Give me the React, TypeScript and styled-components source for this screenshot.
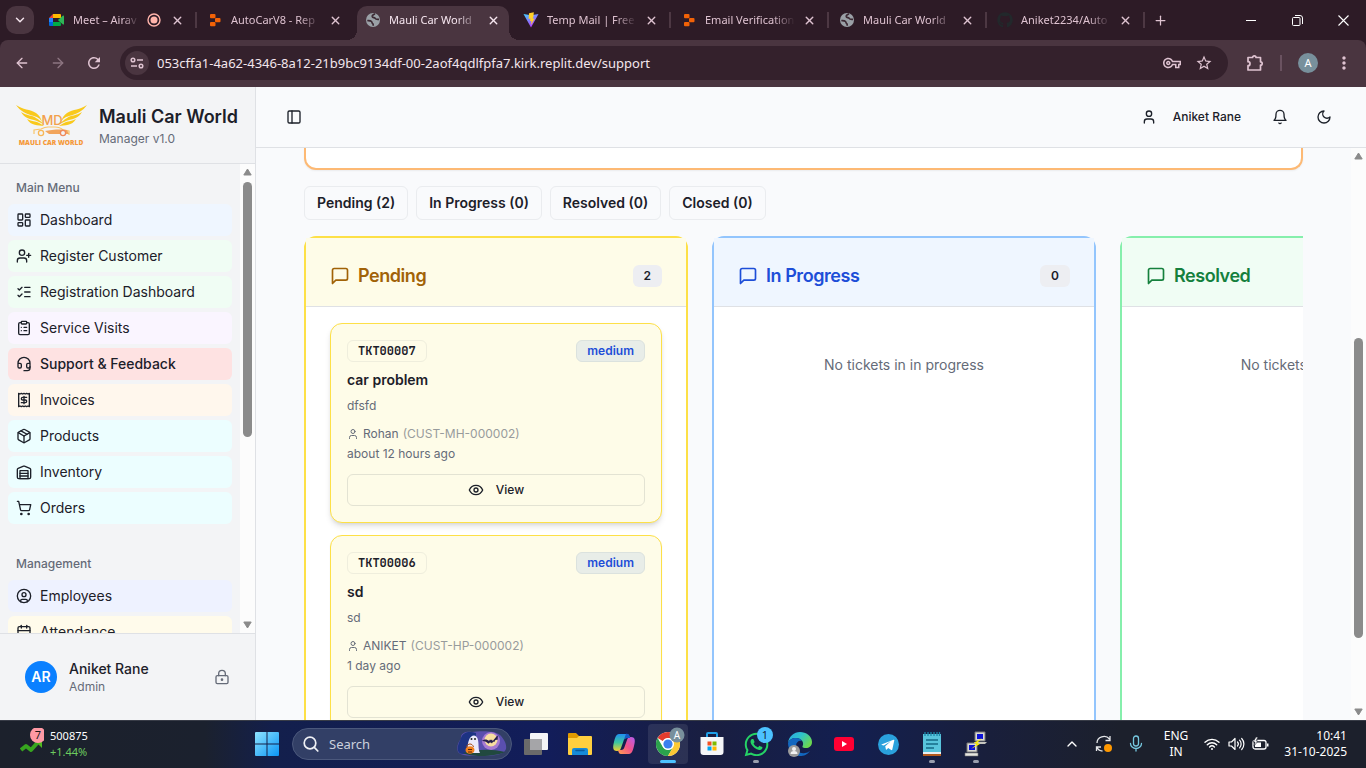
import React from "react";
import styled, { createGlobalStyle, css } from "styled-components";
import {
  LayoutDashboard,
  UserPlus,
  ListChecks,
  ClipboardList,
  Headset,
  Package,
  ShoppingCart,
  CircleUser,
  Calendar,
  LockKeyhole,
  PanelLeft,
  User,
  ArrowLeft,
  ArrowRight,
  X,
  Plus,
  ChevronDown,
  ChevronUp,
} from "lucide-react";
import { FaGithub, FaWhatsapp } from "react-icons/fa";
import { MdOutlineVpnKey, MdStarBorder, MdMoreVert, MdRefresh } from "react-icons/md";

const ui = `"Noto Sans", "Open Sans", sans-serif`;
const app = `Inter, "Liberation Sans", sans-serif`;

const Global = createGlobalStyle`
  *, *::before, *::after { box-sizing: border-box; }
  body { margin: 0; font-family: ${app}; color: #1c2029; }
  button, input { font: inherit; color: inherit; border: 0; background: none; padding: 0; margin: 0; }
  button { cursor: pointer; }
  h1, h2, h3, p, ul { margin: 0; padding: 0; font: inherit; }
  ul { list-style: none; }
  a { color: inherit; text-decoration: none; }
  svg { display: block; flex: none; }
`;

const Screen = styled.div`
  height: 100vh;
  display: flex;
  flex-direction: column;
  overflow: hidden;
`;

/* ---------- browser chrome ---------- */

const TabStrip = styled.div`
  display: flex;
  align-items: center;
  height: 40px;
  flex: none;
  padding-left: 6px;
  background: #2d1b26;
  color: #dfc3d1;
  font-family: ${ui};
  font-size: 11px;
`;

const TabSearch = styled.button`
  display: grid;
  place-items: center;
  width: 28px;
  height: 28px;
  margin-right: 4px;
  border-radius: 10px;
  background: #4a3540;
  color: #f3e3ec;
  flex: none;
`;

const Tab = styled.div<{ $active?: boolean; $line?: boolean }>`
  position: relative;
  display: flex;
  align-items: center;
  gap: 8px;
  width: 158px;
  height: 34px;
  margin-top: 6px;
  padding: 0 12px 6px 11px;
  flex: 0 1 158px;
  z-index: 0;
  ${(p) =>
    p.$line &&
    css`
      &::after {
        content: "";
        position: absolute;
        right: -1px;
        top: 6px;
        width: 2px;
        height: 16px;
        background: #4d3843;
      }
    `}
  ${(p) =>
    p.$active &&
    css`
      color: #f6e6ef;
      &::before {
        content: "";
        position: absolute;
        z-index: -1;
        inset: 0 3px;
        border-radius: 10px 10px 0 0;
        background: #4a3540;
      }
      &::after {
        content: "";
        position: absolute;
        z-index: -1;
        left: -7px;
        right: -7px;
        bottom: 0;
        height: 10px;
        background:
          radial-gradient(circle at 0 0, transparent 10px, #4a3540 10px) left / 10px 10px no-repeat,
          radial-gradient(circle at 100% 0, transparent 10px, #4a3540 10px) right / 10px 10px no-repeat;
      }
    `}
`;

const TabTitle = styled.button`
  flex: 1;
  min-width: 0;
  overflow: hidden;
  white-space: nowrap;
  text-align: left;
  line-height: 18px;
  mask-image: linear-gradient(to right, #000 75%, transparent);
`;

const IconButton = styled.button<{ $w?: number }>`
  display: grid;
  place-items: center;
  flex: none;
  width: ${(p) => (p.$w ? `${p.$w}px` : "auto")};
`;

const WindowButtons = styled.div`
  display: flex;
  margin-left: auto;
  color: #fff;
  button {
    width: 46px;
    height: 40px;
  }
`;

const Toolbar = styled.div`
  display: flex;
  align-items: center;
  height: 47px;
  flex: none;
  padding: 0 12px 1px;
  background: #4a3540;
  color: #dfc3d1;
  border-radius: 8px 8px 0 0;
  font-family: ${ui};
`;

const ToolbarWrap = styled.div`
  background: #2d1b26;
`;

const NavButton = styled(IconButton)<{ $dim?: boolean }>`
  width: 20px;
  height: 20px;
  margin-right: 16px;
  opacity: ${(p) => (p.$dim ? 0.45 : 1)};
`;

const Omnibox = styled.div`
  display: flex;
  align-items: center;
  flex: 1;
  height: 34px;
  padding: 0 15px 0 5px;
  border-radius: 17px;
  background: #34212c;
`;

const SiteInfo = styled(IconButton)`
  width: 24px;
  height: 24px;
  border-radius: 12px;
  background: #4a3540;
  margin-right: 8px;
`;

const Address = styled.input`
  flex: 1;
  min-width: 0;
  height: 24px;
  color: #f3e6ed;
  font-size: 13px;
  outline: 0;
`;

const OmniActions = styled.div`
  display: flex;
  gap: 14px;
`;

const ToolbarEnd = styled.div`
  display: flex;
  align-items: center;
  margin-left: 18px;
`;

const ToolbarRule = styled.span`
  width: 2px;
  height: 16px;
  margin: 0 16px;
  background: #6a5260;
`;

const Profile = styled.button`
  width: 20px;
  height: 20px;
  margin-right: 16px;
  border-radius: 10px;
  background: #78909c;
  color: #fff;
  font-size: 11px;
  line-height: 20px;
`;

/* ---------- application ---------- */

const Page = styled.div`
  display: flex;
  flex: 1;
  min-height: 0;
  background: #f9fafc;
`;

const Sidebar = styled.aside`
  display: flex;
  flex-direction: column;
  width: 256px;
  flex: none;
  background: #f3f4f6;
  border-right: 1px solid #dfe1e5;
`;

const Brand = styled.div`
  display: flex;
  align-items: center;
  gap: 12px;
  height: 77px;
  flex: none;
  padding-left: 16px;
  border-bottom: 1px solid #dfe1e5;
`;

const BrandName = styled.h1`
  font-size: 18px;
  line-height: 28px;
  font-weight: 600;
  white-space: nowrap;
`;

const Small = styled.p`
  font-size: 12px;
  line-height: 16px;
  color: #656b78;
`;

const MenuArea = styled.div`
  display: flex;
  flex: 1;
  min-height: 0;
`;

const Menu = styled.nav`
  flex: 1;
  min-height: 0;
  overflow: hidden;
  display: flex;
  flex-direction: column;
  gap: 8px;
`;

const MenuGroup = styled.section`
  padding: 8px;
`;

const MenuLabel = styled.h2`
  padding: 0 8px;
  font-size: 12px;
  line-height: 32px;
  font-weight: 500;
  color: #656b78;
`;

const MenuList = styled.ul`
  display: flex;
  flex-direction: column;
  gap: 4px;
`;

const MenuLink = styled.a<{ $bg: string; $active?: boolean }>`
  display: flex;
  align-items: center;
  gap: 8px;
  height: 32px;
  padding: 0 8px;
  border-radius: 6px;
  background: ${(p) => p.$bg};
  font-size: 14px;
  line-height: 20px;
  font-weight: ${(p) => (p.$active ? 500 : 400)};
`;

const SidebarFooter = styled.div`
  display: flex;
  align-items: center;
  gap: 12px;
  height: 87px;
  flex: none;
  padding: 0 25px;
  border-top: 1px solid #dfe1e5;
`;

const Avatar = styled.span`
  width: 32px;
  height: 32px;
  border-radius: 16px;
  background: #0a80ff;
  color: #fff;
  font-size: 14px;
  font-weight: 600;
  line-height: 32px;
  text-align: center;
`;

const UserName = styled.p`
  font-size: 14px;
  line-height: 20px;
  font-weight: 500;
`;

const LockButton = styled(IconButton)`
  margin-left: auto;
  color: #656b78;
`;

const Track = styled.div`
  display: flex;
  flex-direction: column;
  align-items: center;
  width: 15px;
  flex: none;
  padding: 4px 0;
  background: #fcfcfc;
`;

const Space = styled.span<{ $grow: number }>`
  flex: ${(p) => p.$grow} 1 0;
`;

const Thumb = styled(Space)`
  width: 9px;
  border-radius: 5px;
  background: #8b8b8b;
`;

function Scrollbar({ before, size, after }: { before: number; size: number; after: number }) {
  return (
    <Track aria-hidden="true">
      <svg width="9" height="8" viewBox="0 0 9 8">
        <path d="M4.500 1 8.200 7H.8Z" fill="#8b8b8b" stroke="#8b8b8b" strokeLinejoin="round" />
      </svg>
      <Space $grow={before} />
      <Thumb $grow={size} />
      <Space $grow={after} />
      <svg width="9" height="8" viewBox="0 0 9 8">
        <path d="M4.500 7 8.200 1H.8Z" fill="#8b8b8b" stroke="#8b8b8b" strokeLinejoin="round" />
      </svg>
    </Track>
  );
}

const Workspace = styled.div`
  display: flex;
  flex-direction: column;
  flex: 1;
  min-width: 0;
`;

const TopBar = styled.header`
  display: flex;
  align-items: center;
  height: 61px;
  flex: none;
  padding: 0 34px 0 30px;
  border-bottom: 1px solid #dfe1e5;
`;

const TopActions = styled.div`
  display: flex;
  align-items: center;
  gap: 28px;
  margin-left: auto;
`;

const UserButton = styled.button`
  display: flex;
  align-items: center;
  gap: 16px;
  margin-right: 3px;
  font-size: 12px;
  line-height: 16px;
  font-weight: 500;
`;

const ScrollArea = styled.div`
  display: flex;
  flex: 1;
  min-height: 0;
`;

const Main = styled.main`
  display: flex;
  flex-direction: column;
  gap: 16px;
  flex: 1;
  min-width: 0;
  padding: 0 48px;
  overflow: hidden;
`;

const Panel = styled.section`
  height: 22px;
  flex: none;
  background: #fff;
  border: 2px solid #fdb974;
  border-top: 0;
  border-radius: 0 0 12px 12px;
  box-shadow: 0 1px 2px rgba(0, 0, 0, 0.06);
`;

const Filters = styled.div`
  display: flex;
  gap: 8px;
  flex: none;
`;

const Filter = styled.button`
  height: 34px;
  padding: 0 12px;
  border: 1px solid #eaecef;
  border-radius: 6px;
  font-size: 14px;
  line-height: 20px;
  font-weight: 600;
  white-space: nowrap;
`;

const Board = styled.div`
  display: flex;
  gap: 24px;
  flex: none;
  overflow: hidden;
`;

const Column = styled.section<{ $line: string }>`
  flex: 0 0 384px;
  min-height: 560px;
  border: 2px solid ${(p) => p.$line};
  border-radius: 12px;
  background: #fff;
`;

const ColumnHead = styled.div<{ $bg: string; $fg: string }>`
  display: flex;
  align-items: center;
  gap: 8px;
  padding: 24px 24px 16px;
  border-bottom: 1px solid #dfe1e5;
  background: ${(p) => p.$bg};
  color: ${(p) => p.$fg};
`;

const ColumnTitle = styled.h2`
  font-size: 18px;
  line-height: 28px;
  font-weight: 600;
  letter-spacing: -0.025em;
`;

const Count = styled.span`
  margin-left: auto;
  padding: 3px 11px;
  border-radius: 6px;
  background: #edeef2;
  color: #1c2029;
  font-size: 12px;
  line-height: 16px;
  font-weight: 600;
`;

const ColumnBody = styled.div`
  display: flex;
  flex-direction: column;
  gap: 12px;
  padding: 16px 24px;
`;

const Empty = styled.p`
  padding: 32px 0;
  text-align: center;
  font-size: 14px;
  line-height: 20px;
  color: #656b78;
`;

const Ticket = styled.article<{ $raised?: boolean }>`
  padding: 16px;
  border: 1px solid #fde047;
  border-radius: 12px;
  background: #fefce8;
  box-shadow: ${(p) =>
    p.$raised ? "0 4px 6px -1px rgba(0,0,0,.12), 0 2px 4px -2px rgba(0,0,0,.12)" : "0 1px 2px rgba(0,0,0,.05)"};
`;

const Row = styled.div`
  display: flex;
  justify-content: space-between;
`;

const Tag = styled.span<{ $kind: "id" | "level" }>`
  padding: 2px 10px;
  border: 1px solid ${(p) => (p.$kind === "id" ? "#efeedd" : "#dbe2de")};
  border-radius: 6px;
  background: ${(p) => (p.$kind === "id" ? "transparent" : "#e8ede8")};
  color: ${(p) => (p.$kind === "id" ? "#1c2029" : "#1d4ed8")};
  font-family: ${(p) => (p.$kind === "id" ? `"JetBrains Mono", "Liberation Mono", monospace` : app)};
  font-size: 12px;
  line-height: 16px;
  font-weight: 600;
`;

const TicketTitle = styled.h3`
  margin-top: 8px;
  font-size: 14px;
  line-height: 20px;
  font-weight: 600;
`;

const TicketText = styled(Small)`
  margin: 8px 0 12px;
`;

const Customer = styled(Small)`
  display: flex;
  align-items: center;
  gap: 4px;
  margin-bottom: 4px;
  span {
    color: #989b9c;
  }
`;

const ViewButton = styled.button`
  display: flex;
  align-items: center;
  justify-content: center;
  gap: 12px;
  width: 100%;
  height: 32px;
  margin-top: 12px;
  border: 1px solid #e3e3d3;
  border-radius: 6px;
  font-size: 12px;
  line-height: 16px;
  font-weight: 500;
`;

/* ---------- outline icons ---------- */

function Glyph({ size = 16, children }: { size?: number; children: React.ReactNode }) {
  return (
    <svg
      width={size}
      height={size}
      viewBox="0 0 24 24"
      fill="none"
      stroke="currentColor"
      strokeWidth="2"
      strokeLinecap="round"
      strokeLinejoin="round"
      aria-hidden="true"
    >
      {children}
    </svg>
  );
}

const ReceiptIcon = () => (
  <Glyph>
    <path d="M4 2v20l2-1 2 1 2-1 2 1 2-1 2 1 2-1 2 1V2l-2 1-2-1-2 1-2-1-2 1-2-1-2 1Z" />
    <path d="M16 8h-6a2 2 0 1 0 0 4h4a2 2 0 1 1 0 4H8M12 17.500v-11" />
  </Glyph>
);

const WarehouseIcon = () => (
  <Glyph>
    <path d="M22 8.350V20a2 2 0 0 1-2 2H4a2 2 0 0 1-2-2V8.350A2 2 0 0 1 3.260 6.500l8-3.200a2 2 0 0 1 1.480 0l8 3.200A2 2 0 0 1 22 8.350Z" />
    <path d="M6 18h12M6 14h12" />
    <rect x="6" y="10" width="12" height="12" />
  </Glyph>
);

const BellIcon = () => (
  <Glyph>
    <path d="M6 8a6 6 0 0 1 12 0c0 7 3 9 3 9H3s3-2 3-9M10.300 21a1.940 1.940 0 0 0 3.400 0" />
  </Glyph>
);

const MoonIcon = () => (
  <Glyph>
    <path d="M12 3a6 6 0 0 0 9 9 9 9 0 1 1-9-9Z" />
  </Glyph>
);

const MessageIcon = () => (
  <Glyph size={20}>
    <path d="M21 15a2 2 0 0 1-2 2H7l-4 4V5a2 2 0 0 1 2-2h14a2 2 0 0 1 2 2z" />
  </Glyph>
);

const EyeIcon = () => (
  <Glyph>
    <path d="M2 12s3-7 10-7 10 7 10 7-3 7-10 7-10-7-10-7Z" />
    <circle cx="12" cy="12" r="3" />
  </Glyph>
);

/* ---------- favicons and logos ---------- */

const MeetIcon = () => (
  <svg width="16" height="16" viewBox="0 0 16 16">
    <path d="M4 2h7a1 1 0 0 1 1 1v3H4Z" fill="#ffba00" />
    <path d="M4 2 0 6h4Z" fill="#ea4335" />
    <path d="M0 6h4v4H0Z" fill="#2684fc" />
    <path d="M0 10h4v4H1a1 1 0 0 1-1-1Z" fill="#0066da" />
    <path d="M4 10h8v3a1 1 0 0 1-1 1H4Z" fill="#00ac47" />
    <path d="M12 6v6L9 8Z" fill="#00832d" />
    <path d="m9 8 5-4.500c.4-.3 1 0 1 .5v8c0 .5-.6.800-1 .5Z" fill="#2fb457" />
    <path d="M4 6h5v4H4Z" fill="#2d1b26" />
  </svg>
);

const RecordIcon = () => (
  <svg width="16" height="14" viewBox="0 0 16 14">
    <circle cx="7" cy="7" r="6" fill="none" stroke="#ffb4ab" strokeWidth="1.400" />
    <circle cx="7" cy="7" r="3.500" fill="#ffb4ab" />
  </svg>
);

const ReplitIcon = () => (
  <svg width="16" height="16" viewBox="0 0 16 16" fill="#f26207">
    <rect x="3" y="2" width="5.500" height="4.300" rx="1" />
    <rect x="8" y="6" width="5.500" height="4.300" rx="1" />
    <rect x="3" y="10" width="5.500" height="4.300" rx="1" />
  </svg>
);

const GlobeIcon = () => (
  <svg width="16" height="16" viewBox="0 0 16 16">
    <circle cx="8" cy="8" r="7" fill="#9aa0a6" />
    <path
      d="M2.300 8.500c1.500.2 3.200 0 4.200 1 .8.800.3 1.800 1.300 2.300.6.300.4 1 .4 2M10 1.800C8.500 2.600 6.800 3 7.300 4.600c.5 1.400 2.400.6 3 1.900.5 1.100 2 .9 3.700.8"
      fill="none"
      stroke="#3b2933"
      strokeWidth="1.700"
    />
  </svg>
);

const ViteIcon = () => (
  <svg width="16" height="16" viewBox="0 0 16 16">
    <defs>
      <linearGradient id="vite" x1="0" y1="0" x2=".6" y2="1">
        <stop offset="0" stopColor="#41d1ff" />
        <stop offset="1" stopColor="#bd34fe" />
      </linearGradient>
    </defs>
    <path d="M.5 2 8 15.500 15.500 2 8 3.300Z" fill="url(#vite)" />
    <path d="M10.800.3 6 1.300 5.600 7l1.900-.4-.6 2.600 1.600-.4L8 13l3.600-6.600-1.900.4.8-2.500Z" fill="#ffd028" />
  </svg>
);

const PuzzleIcon = () => (
  <svg width="18" height="18" viewBox="0 0 18 18" fill="none" stroke="currentColor" strokeWidth="1.700" strokeLinejoin="round">
    <path d="M2 3.500h4.600a1.700 1.700 0 0 1 3.400 0h4.500v4.300a1.700 1.700 0 0 1 0 3.400V16H2v-4.300a2 2 0 0 0 0-4Z" />
  </svg>
);

const BrandLogo = () => (
  <svg width="71" height="44" viewBox="0 0 71 44" aria-label="Mauli Car World logo">
    <g fill="#f9c91c">
      <path d="M0 2c7 5 14 4 20 8 3 2 5 5 6 9-2-4-5-5-8-6C10 11 4 8 0 2Z" />
      <path d="M5 9c6 4 11 3 15 6 3 2 5 3 7 6-3-2-6-3-9-4C12 16 8 14 5 9Z" />
      <path d="M11 16c4 2 7 2 10 3 3 1 5 3 7 4-6-1-13 0-17-7Z" />
      <path d="M71 2c-7 5-14 4-20 8-3 2-5 5-6 9 2-4 5-5 8-6 8-2 14-5 18-11Z" />
      <path d="M66 9c-6 4-11 3-15 6-3 2-5 3-7 6 3-2 6-3 9-4 6-1 10-3 13-8Z" />
      <path d="M60 16c-4 2-7 2-10 3-3 1-5 3-7 4 6-1 13 0 17-7Z" />
    </g>
    <text x="36" y="22" textAnchor="middle" fontFamily="Inter" fontSize="13" fontWeight="500" fill="#f2a04c">
      MD
    </text>
    <path
      d="M18 31v-4l7-1c2-1 4-2 7-2h7c4 0 6 1 8 3l6 1v4"
      fill="none"
      stroke="#f9c56a"
      strokeWidth="1.200"
    />
    <path d="M29 28c6-1 14-2 22-1l2 4H33Z" fill="#f2a55c" />
    <circle cx="25" cy="30" r="2.600" fill="#f3f4f6" stroke="#f7b757" strokeWidth="1.300" />
    <circle cx="47" cy="30" r="2.600" fill="#f3f4f6" stroke="#ef8a5c" strokeWidth="1.300" />
    <text x="35" y="42" textAnchor="middle" fontFamily="Open Sans" fontSize="6.600" fontWeight="800" fill="#f5993a">
      MAULI CAR WORLD
    </text>
  </svg>
);

/* ---------- taskbar ---------- */

const Taskbar = styled.footer`
  display: flex;
  align-items: center;
  height: 48px;
  flex: none;
  padding: 0 19px 1px 0;
  border-top: 1px solid #383c47;
  background: linear-gradient(
    90deg,
    #1c212c 0,
    #1b212e 15%,
    #131f4c 20%,
    #121d5a 40%,
    #191e40 52%,
    #131f50 62%,
    #191f3c 72%,
    #1c202c 82%
  );
  color: #fff;
  font-family: ${ui};
  font-size: 12px;
  line-height: 16px;
`;

const Stocks = styled.button`
  display: flex;
  gap: 6px;
  width: 245px;
  padding-left: 20px;
  flex: none;
  text-align: left;
  font-size: 11px;
`;

const Gain = styled.span`
  display: block;
  color: #6ccb5f;
`;

const TaskButton = styled.button<{ $current?: boolean }>`
  display: grid;
  place-items: center;
  width: 40px;
  height: 40px;
  margin: 0 2px;
  flex: none;
  border-radius: 4px;
  background: ${(p) => (p.$current ? "rgba(255,255,255,.09)" : "none")};
`;

const TaskSearch = styled.label`
  display: flex;
  align-items: center;
  gap: 10px;
  width: 220px;
  height: 32px;
  margin: 0 2px 0 3px;
  padding: 0 4px 0 10px;
  flex: none;
  border: 1px solid #4b587c;
  border-radius: 16px;
  background: #323f66;
  input {
    flex: 1;
    min-width: 0;
    height: 20px;
    font-size: 13px;
    outline: 0;
  }
  input::placeholder {
    color: #ccd1dd;
    opacity: 1;
  }
`;

const Tray = styled.div`
  display: flex;
  align-items: center;
  margin-left: auto;
  text-align: center;
`;

const TrayItem = styled.button<{ $w: number }>`
  display: grid;
  place-items: center;
  width: ${(p) => p.$w}px;
`;

const Clock = styled.button`
  width: 75px;
  text-align: right;
`;

const StockIcon = () => (
  <svg width="24" height="30" viewBox="0 0 24 30">
    <path d="m1 22 5-4 5 4 8-9" fill="none" stroke="#37a51f" strokeWidth="4" strokeLinejoin="round" />
    <path d="M14 12h8v8Z" fill="#4fb81f" />
    <circle cx="18" cy="7" r="8" fill="#ff99a4" />
    <text x="18" y="11" textAnchor="middle" fontSize="11" fill="#1a1a1a">
      7
    </text>
  </svg>
);

const StartIcon = () => (
  <svg width="24" height="24" viewBox="0 0 24 24">
    <defs>
      <linearGradient id="win" x1="0" y1="0" x2="1" y2="1">
        <stop offset="0" stopColor="#8fe3ff" />
        <stop offset="1" stopColor="#0a95f5" />
      </linearGradient>
    </defs>
    <path d="M1 0h10.500v11.500H0V1a1 1 0 0 1 1-1Zm11.500 0H23a1 1 0 0 1 1 1v10.500H12.500V0ZM0 12.500h11.500V24H1a1 1 0 0 1-1-1Zm12.500 0H24V23a1 1 0 0 1-1 1H12.500Z" fill="url(#win)" />
  </svg>
);

const SearchIcon = () => (
  <svg width="16" height="16" viewBox="0 0 16 16" fill="none" stroke="#eef0f5" strokeWidth="1.700" strokeLinecap="round">
    <circle cx="7" cy="7" r="5.800" />
    <path d="m11.300 11.300 3.500 3.700" />
  </svg>
);

const HalloweenArt = () => (
  <svg width="50" height="26" viewBox="0 0 50 26">
    <path d="M1 21C-1 15 2 10 4 8 3 2 9 0 15 1c7-1 22-2 28 3 4 4 7 9 6 14-2 6-12 7-24 7S4 25 1 21Z" fill="#5a4fae" />
    <path d="M1 20C0 14 3 10 4 7c2-6 8-7 15-5v21H6c-3 0-4-1-5-3Z" fill="#1d3383" />
    <circle cx="34" cy="10" r="9" fill="#a77bd2" />
    <circle cx="34" cy="9" r="6.500" fill="#f8e0a0" />
    <path d="M6 22c12-3 26-5 42-1-6 4-33 6-42 1Z" fill="#21493f" />
    <path d="M10 22c1-4 0-8 2-13 2-6 8-6 9 0 1 5 0 9 2 13Z" fill="#eceafb" />
    <circle cx="14.500" cy="8" r="1" fill="#222" />
    <circle cx="18" cy="8" r="1" fill="#222" />
    <ellipse cx="13" cy="19" rx="4.500" ry="3.800" fill="#f2811d" />
    <path d="M9.500 16c1-4 6-4 7 0" fill="none" stroke="#a84a10" />
    <path d="m11 18 1 1 1-1 1 1 1-1M11 21h4" stroke="#5b2408" fill="none" />
    <path d="M25 10c2-2 5-2 7 0l1-1.500 1 .8 1-.8.700 1.500C38 8 39 5 41 4.500c-.5 2 0 3-.5 4.500-2-.5-2.500.5-3 2-1-.5-2 0-2.500 1.500-1-1.500-2.500-1.500-3.500.3C30 11 28 10.300 25 10Z" fill="#27204d" />
  </svg>
);

const TaskViewIcon = () => (
  <svg width="26" height="24" viewBox="0 0 26 24">
    <rect x="7" y="1" width="18" height="17" rx="1" fill="#f4f4f6" />
    <rect x="1" y="7" width="18" height="16" rx="1" fill="#6a6a6a" />
    <path d="M7 7h12v11H7Z" fill="#a5a5a8" />
  </svg>
);

const FolderIcon = () => (
  <svg width="26" height="24" viewBox="0 0 26 24">
    <path d="M1 2a1 1 0 0 1 1-1h7l3 3v4H1Z" fill="#e19a00" />
    <path d="M1 6h9l2-2h12a1 1 0 0 1 1 1v17a1 1 0 0 1-1 1H2a1 1 0 0 1-1-1Z" fill="#ffcf3f" />
    <path d="M5 23v-5a2 2 0 0 1 2-2h12a2 2 0 0 1 2 2v5Z" fill="#168ad8" />
    <path d="M9 18.500h8" stroke="#0b5a9c" strokeWidth="1.500" strokeLinecap="round" />
  </svg>
);

const CopilotIcon = () => (
  <svg width="24" height="24" viewBox="0 0 24 24">
    <defs>
      <linearGradient id="cpa" x1="0" y1="0" x2="0" y2="1">
        <stop offset="0" stopColor="#1f8ff0" />
        <stop offset=".5" stopColor="#3cc6a0" />
        <stop offset="1" stopColor="#f3d02c" />
      </linearGradient>
      <linearGradient id="cpb" x1="1" y1="0" x2="0" y2="1">
        <stop offset="0" stopColor="#b45df0" />
        <stop offset=".5" stopColor="#f2528a" />
        <stop offset="1" stopColor="#ffa34d" />
      </linearGradient>
    </defs>
    <path d="M7 2h8c2 0 2.500 2 3 4h-3c-2 0-3 1-3.500 3L9 16c-.5 2-1.500 3-4 3-5 0-4-5-3-9s2-8 5-8Z" fill="url(#cpa)" />
    <path d="M17 22H9c-2 0-2.500-2-3-4h3c2 0 3-1 3.500-3L15 8c.5-2 1.500-3 4-3 5 0 4 5 3 9s-2 8-5 8Z" fill="url(#cpb)" />
    <path d="M14 1.800c3 0 3.500 2 4.200 4.200H15c-2 0-2.800 1-3.300 2.600Z" fill="#1459c7" />
  </svg>
);

const ChromeIcon = () => (
  <svg width="40" height="40" viewBox="0 0 40 40">
    <circle cx="20" cy="20" r="12" fill="#fff" />
    <path d="M9.600 14A12 12 0 0 1 30.400 14H20a6 6 0 0 0-5.200 3Z" fill="#e33b2e" />
    <path d="M9.600 14A12 12 0 0 0 20 32l5.200-9A6 6 0 0 1 14.800 23Z" fill="#2ba24c" />
    <path d="M30.400 14A12 12 0 0 1 20 32l5.200-9A6 6 0 0 0 20 14Z" fill="#fcc934" />
    <circle cx="20" cy="20" r="5.800" fill="#fff" />
    <circle cx="20" cy="20" r="4.600" fill="#3b80f0" />
    <circle cx="29" cy="11" r="7.500" fill="#78909c" />
    <text x="29" y="15" textAnchor="middle" fontSize="10" fill="#fff">
      A
    </text>
    <rect x="12" y="36" width="16" height="3" rx="1.500" fill="#4cc2ff" />
  </svg>
);

const StoreIcon = () => (
  <svg width="24" height="24" viewBox="0 0 24 24">
    <path d="M7 6V2a1 1 0 0 1 1-1h8a1 1 0 0 1 1 1v4" fill="none" stroke="#1fa0e8" strokeWidth="2" />
    <path d="M.5 5h23v15a3 3 0 0 1-3 3h-17a3 3 0 0 1-3-3Z" fill="#f5f6f8" />
    <path d="M7.500 9.500h4v4h-4Z" fill="#f25022" />
    <path d="M12.500 9.500h4v4h-4Z" fill="#7fba00" />
    <path d="M7.500 14.500h4v4h-4Z" fill="#00a4ef" />
    <path d="M12.500 14.500h4v4h-4Z" fill="#ffb900" />
  </svg>
);

const WhatsAppIcon = () => (
  <svg width="40" height="40" viewBox="0 0 40 40">
    <FaWhatsapp x="7" y="7" size={27} color="#25d366" />
    <circle cx="29" cy="11" r="8" fill="#4cc2ff" />
    <text x="29" y="15" textAnchor="middle" fontSize="11" fill="#12233a">
      1
    </text>
    <rect x="17" y="36" width="6" height="3" rx="1.500" fill="#9a9fae" />
  </svg>
);

const EdgeIcon = () => (
  <svg width="26" height="26" viewBox="0 0 26 26">
    <defs>
      <linearGradient id="edge" x1="0" y1="0" x2="1" y2=".6">
        <stop offset="0" stopColor="#2aa5e8" />
        <stop offset=".5" stopColor="#2fc3c9" />
        <stop offset="1" stopColor="#6bd84f" />
      </linearGradient>
    </defs>
    <path d="M1 12C2 5 7 1 13 1s12 4 12 10c0 4-3 6-6 6-4 0-4-1-3-3 1-4-3-7-7-7-4 0-7 2-8 5Z" fill="url(#edge)" />
    <path d="M1 12c1-3 4-5 8-5 3 0 5 1 6 3-3-1-6 1-6 5 0 5 4 8 9 7 2 0 3-1 5-2-3 4-6 5-10 5C6 25 1 19 1 12Z" fill="#1267c0" />
    <circle cx="7" cy="20" r="6" fill="#9c9c9c" />
    <circle cx="7" cy="18" r="2" fill="#f1f1f1" />
    <path d="M3.500 23a3.500 3 0 0 1 7 0Z" fill="#f1f1f1" />
  </svg>
);

const YouTubeIcon = () => (
  <svg width="20" height="14" viewBox="0 0 20 14">
    <rect width="20" height="14" rx="3" fill="#ff0033" />
    <path d="m8 4 5 3-5 3Z" fill="#fff" />
  </svg>
);

const TelegramIcon = () => (
  <svg width="21" height="21" viewBox="0 0 21 21">
    <circle cx="10.500" cy="10.500" r="10.500" fill="#2aa1dc" />
    <path d="m4 10.300 11.500-4.600c.6-.2 1 .1.800.9l-2 9c-.1.600-.6.800-1.100.5l-3-2.200-1.500 1.500c-.4.4-.7.300-.8-.2l-.7-2.900 5.600-5-7 4.300-2-.6c-.5-.2-.4-.5.200-.7Z" fill="#fff" />
  </svg>
);

const NotepadIcon = () => (
  <svg width="20" height="40" viewBox="0 0 20 40">
    <path d="M1 10h18v20H1Z" fill="#58c4dc" />
    <path d="M1 29h18v3H1Z" fill="#b45a1e" />
    <path d="M1 28h18v2H1Z" fill="#e9eef2" />
    <path d="M3 8v4M6 8v4M9 8v4M12 8v4M15 8v4M17.500 8v4" stroke="#1b87a8" strokeWidth="1.300" />
    <path d="M4 16h12M4 20h12M4 24h8" stroke="#156a86" strokeWidth="1.500" />
    <rect x="7" y="36" width="6" height="3" rx="1.500" fill="#9a9fae" />
  </svg>
);

const PuttyIcon = () => (
  <svg width="24" height="40" viewBox="0 0 24 40">
    <path d="M11 8h10v9H11Z" fill="#d9d9d2" stroke="#777" />
    <path d="M13 10h6v5h-6Z" fill="#0c12d8" />
    <path d="M10 18h13l-2 2H10Z" fill="#c6c6bf" />
    <path d="M3 19h10v9H3Z" fill="#d9d9d2" stroke="#777" />
    <path d="M5 21h6v5H5Z" fill="#0c12d8" />
    <path d="M1 29h13v3H1Z" fill="#e6e6e0" stroke="#777" strokeWidth=".6" />
    <path d="m18 14-8 5 3 1-6 5 9-5-3-1Z" fill="#fff200" />
    <rect x="9" y="36" width="6" height="3" rx="1.500" fill="#9a9fae" />
  </svg>
);

const SyncIcon = () => (
  <svg width="18" height="18" viewBox="0 0 18 18" fill="none" stroke="#e6e7ea" strokeWidth="1.300">
    <path d="M2 8a7 6.500 0 0 1 12.500-4M15 1v4.500h-4.500M1.500 16v-4h4.500M2 12.500C3 14.500 5 16 7.500 16" />
    <circle cx="13" cy="13" r="4" fill="#ff9800" stroke="none" />
  </svg>
);

const MicIcon = () => (
  <svg width="14" height="18" viewBox="0 0 14 18" fill="none" stroke="#76c8e0" strokeWidth="1.300" strokeLinecap="round">
    <rect x="4.500" y="1" width="5" height="10" rx="2.500" />
    <path d="M1.500 8.500a5.500 5 0 0 0 11 0M7 13.500V16" />
  </svg>
);

const WifiIcon = () => (
  <svg width="16" height="14" viewBox="0 0 16 14" fill="none" stroke="#fff" strokeWidth="1.400" strokeLinecap="round">
    <path d="M1 5.200a10 10 0 0 1 14 0M3.300 7.700a6.700 6.700 0 0 1 9.400 0M5.600 10a3.400 3.400 0 0 1 4.800 0" />
    <circle cx="8" cy="12" r="1" fill="#fff" stroke="none" />
  </svg>
);

const VolumeIcon = () => (
  <svg width="17" height="14" viewBox="0 0 17 14" fill="none" stroke="#fff" strokeWidth="1.200" strokeLinecap="round" strokeLinejoin="round">
    <path d="M1 5h2.500L7 1.500v11L3.500 9H1ZM9.500 5a3 3 0 0 1 0 4M11.600 3.200a5.500 5.500 0 0 1 0 7.600M13.700 1.500a8 8 0 0 1 0 11" />
  </svg>
);

const BatteryIcon = () => (
  <svg width="17" height="14" viewBox="0 0 17 14">
    <rect x="1" y="3.500" width="13" height="8.500" rx="2" fill="none" stroke="#fff" strokeWidth="1.300" />
    <path d="M3 5.500h6V10H3Z" fill="#fff" />
    <path d="M15 6.500h1.500v3H15Z" fill="#fff" />
    <path d="M4 0 1 5h2l-1 4 4-5H4l2-4Z" fill="#fff" stroke="#1c202c" strokeWidth=".6" />
  </svg>
);

/* ---------- data ---------- */

const tabs = [
  { title: "Meet – Airav", icon: <MeetIcon />, line: true, recording: true },
  { title: "AutoCarV8 - Rep", icon: <ReplitIcon /> },
  { title: "Mauli Car World", icon: <GlobeIcon />, active: true },
  { title: "Temp Mail | Free", icon: <ViteIcon />, line: true },
  { title: "Email Verification", icon: <ReplitIcon />, line: true },
  { title: "Mauli Car World", icon: <GlobeIcon />, line: true },
  { title: "Aniket2234/Auto", icon: <FaGithub size={16} color="#22282b" />, line: true },
];

const mainMenu = [
  { label: "Dashboard", icon: <LayoutDashboard size={16} />, bg: "#eff6ff" },
  { label: "Register Customer", icon: <UserPlus size={16} />, bg: "#f0fdf4" },
  { label: "Registration Dashboard", icon: <ListChecks size={16} />, bg: "#f0fdf4" },
  { label: "Service Visits", icon: <ClipboardList size={16} />, bg: "#faf5ff" },
  { label: "Support & Feedback", icon: <Headset size={16} />, bg: "#fee2e2", active: true },
  { label: "Invoices", icon: <ReceiptIcon />, bg: "#fff7ed" },
  { label: "Products", icon: <Package size={16} />, bg: "#ecfeff" },
  { label: "Inventory", icon: <WarehouseIcon />, bg: "#ecfeff" },
  { label: "Orders", icon: <ShoppingCart size={16} />, bg: "#ecfeff" },
];

const managementMenu = [
  { label: "Employees", icon: <CircleUser size={16} />, bg: "#eef2ff" },
  { label: "Attendance", icon: <Calendar size={16} />, bg: "#fffbeb" },
];

const tickets = [
  { id: "TKT00007", title: "car problem", text: "dfsfd", name: "Rohan", code: "(CUST-MH-000002)", age: "about 12 hours ago", raised: true },
  { id: "TKT00006", title: "sd", text: "sd", name: "ANIKET", code: "(CUST-HP-000002)", age: "1 day ago" },
];

const columns = [
  { title: "Pending", count: 2, line: "#fde047", bg: "#fefce8", fg: "#a16207", empty: "" },
  { title: "In Progress", count: 0, line: "#93c5fd", bg: "#eff6ff", fg: "#1d4ed8", empty: "No tickets in in progress" },
  { title: "Resolved", count: 0, line: "#86efac", bg: "#f0fdf4", fg: "#15803d", empty: "No tickets in resolved" },
];

type Item = { label: string; icon: React.ReactNode; bg: string; active?: boolean };

function Group({ label, items }: { label: string; items: Item[] }) {
  return (
    <MenuGroup>
      <MenuLabel>{label}</MenuLabel>
      <MenuList>
        {items.map((m) => (
          <li key={m.label}>
            <MenuLink href="#" $bg={m.bg} $active={m.active}>
              {m.icon}
              {m.label}
            </MenuLink>
          </li>
        ))}
      </MenuList>
    </MenuGroup>
  );
}

export default function App() {
  return (
    <Screen>
      <Global />
      <TabStrip>
        <TabSearch aria-label="Search tabs">
          <ChevronDown size={14} strokeWidth={2.5} />
        </TabSearch>
        {tabs.map((t, i) => (
          <Tab key={i} $active={t.active} $line={t.line}>
            {t.icon}
            <TabTitle>{t.title}</TabTitle>
            {t.recording && <RecordIcon />}
            <IconButton aria-label="Close tab">
              <X size={13} strokeWidth={2.6} />
            </IconButton>
          </Tab>
        ))}
        <IconButton aria-label="New tab" $w={32}>
          <Plus size={15} />
        </IconButton>
        <WindowButtons>
          <IconButton aria-label="Minimize">
            <svg width="10" height="10" viewBox="0 0 10 10" stroke="currentColor">
              <path d="M0 5.500h10" />
            </svg>
          </IconButton>
          <IconButton aria-label="Restore">
            <svg width="11" height="11" viewBox="0 0 11 11" fill="none" stroke="currentColor">
              <rect x=".5" y="2.500" width="7.500" height="8" rx="1" />
              <path d="M3 .5h5A2.500 2.500 0 0 1 10.500 3v6" />
            </svg>
          </IconButton>
          <IconButton aria-label="Close">
            <svg width="11" height="11" viewBox="0 0 11 11" stroke="currentColor" strokeWidth="1.100">
              <path d="m.5.5 10 10M10.500.5l-10 10" />
            </svg>
          </IconButton>
        </WindowButtons>
      </TabStrip>
      <ToolbarWrap>
        <Toolbar>
          <NavButton aria-label="Back">
            <ArrowLeft size={16} />
          </NavButton>
          <NavButton aria-label="Forward" $dim>
            <ArrowRight size={16} />
          </NavButton>
          <NavButton aria-label="Reload">
            <MdRefresh size={18} />
          </NavButton>
          <Omnibox>
            <SiteInfo aria-label="Site information">
              <svg width="14" height="12" viewBox="0 0 14 12" fill="none" stroke="currentColor" strokeWidth="1.500">
                <circle cx="3" cy="3" r="1.800" />
                <path d="M7 3h6M1 9h6" />
                <circle cx="11" cy="9" r="1.800" />
              </svg>
            </SiteInfo>
            <Address
              aria-label="Address"
              defaultValue="053cffa1-4a62-4346-8a12-21b9bc9134df-00-2aof4qdlfpfa7.kirk.replit.dev/support"
            />
            <OmniActions>
              <IconButton aria-label="Passwords">
                <MdOutlineVpnKey size={18} />
              </IconButton>
              <IconButton aria-label="Bookmark">
                <MdStarBorder size={18} />
              </IconButton>
            </OmniActions>
          </Omnibox>
          <ToolbarEnd>
            <IconButton aria-label="Extensions">
              <PuzzleIcon />
            </IconButton>
            <ToolbarRule />
            <Profile>A</Profile>
            <IconButton aria-label="Menu" $w={20}>
              <MdMoreVert size={20} />
            </IconButton>
          </ToolbarEnd>
        </Toolbar>
      </ToolbarWrap>

      <Page>
        <Sidebar>
          <Brand>
            <BrandLogo />
            <div>
              <BrandName>Mauli Car World</BrandName>
              <Small>Manager v1.0</Small>
            </div>
          </Brand>
          <MenuArea>
            <Menu>
              <Group label="Main Menu" items={mainMenu} />
              <Group label="Management" items={managementMenu} />
            </Menu>
            <Scrollbar before={6} size={255} after={184} />
          </MenuArea>
          <SidebarFooter>
            <Avatar>AR</Avatar>
            <div>
              <UserName>Aniket Rane</UserName>
              <Small>Admin</Small>
            </div>
            <LockButton aria-label="Lock">
              <LockKeyhole size={16} />
            </LockButton>
          </SidebarFooter>
        </Sidebar>

        <Workspace>
          <TopBar>
            <IconButton aria-label="Toggle sidebar">
              <PanelLeft size={16} />
            </IconButton>
            <TopActions>
              <UserButton>
                <User size={16} />
                Aniket Rane
              </UserButton>
              <IconButton aria-label="Notifications">
                <BellIcon />
              </IconButton>
              <IconButton aria-label="Dark mode">
                <MoonIcon />
              </IconButton>
            </TopActions>
          </TopBar>
          <ScrollArea>
            <Main>
              <Panel />
              <Filters>
                <Filter>Pending (2)</Filter>
                <Filter>In Progress (0)</Filter>
                <Filter>Resolved (0)</Filter>
                <Filter>Closed (0)</Filter>
              </Filters>
              <Board>
                {columns.map((c) => (
                  <Column key={c.title} $line={c.line}>
                    <ColumnHead $bg={c.bg} $fg={c.fg}>
                      <MessageIcon />
                      <ColumnTitle>{c.title}</ColumnTitle>
                      <Count>{c.count}</Count>
                    </ColumnHead>
                    <ColumnBody>
                      {c.empty ? (
                        <Empty>{c.empty}</Empty>
                      ) : (
                        tickets.map((t) => (
                          <Ticket key={t.id} $raised={t.raised}>
                            <Row>
                              <Tag $kind="id">{t.id}</Tag>
                              <Tag $kind="level">medium</Tag>
                            </Row>
                            <TicketTitle>{t.title}</TicketTitle>
                            <TicketText>{t.text}</TicketText>
                            <Customer>
                              <User size={12} />
                              {t.name} <span>{t.code}</span>
                            </Customer>
                            <Small>{t.age}</Small>
                            <ViewButton>
                              <EyeIcon />
                              View
                            </ViewButton>
                          </Ticket>
                        ))
                      )}
                    </ColumnBody>
                  </Column>
                ))}
              </Board>
            </Main>
            <Scrollbar before={178} size={300} after={70} />
          </ScrollArea>
        </Workspace>
      </Page>

      <Taskbar>
        <Stocks>
          <StockIcon />
          <span>
            500875
            <Gain>+1.44%</Gain>
          </span>
        </Stocks>
        <TaskButton aria-label="Start">
          <StartIcon />
        </TaskButton>
        <TaskSearch>
          <SearchIcon />
          <input aria-label="Search" placeholder="Search" />
          <HalloweenArt />
        </TaskSearch>
        <TaskButton aria-label="Task view"><TaskViewIcon /></TaskButton>
        <TaskButton aria-label="File Explorer"><FolderIcon /></TaskButton>
        <TaskButton aria-label="Copilot"><CopilotIcon /></TaskButton>
        <TaskButton aria-label="Chrome" $current><ChromeIcon /></TaskButton>
        <TaskButton aria-label="Store"><StoreIcon /></TaskButton>
        <TaskButton aria-label="WhatsApp"><WhatsAppIcon /></TaskButton>
        <TaskButton aria-label="Edge"><EdgeIcon /></TaskButton>
        <TaskButton aria-label="YouTube"><YouTubeIcon /></TaskButton>
        <TaskButton aria-label="Telegram"><TelegramIcon /></TaskButton>
        <TaskButton aria-label="Notepad"><NotepadIcon /></TaskButton>
        <TaskButton aria-label="PuTTY"><PuttyIcon /></TaskButton>
        <Tray>
          <TrayItem $w={32} aria-label="Hidden icons"><ChevronUp size={16} /></TrayItem>
          <TrayItem $w={32} aria-label="Update"><SyncIcon /></TrayItem>
          <TrayItem $w={32} aria-label="Microphone"><MicIcon /></TrayItem>
          <TrayItem $w={48}>
            <span>ENG<br />IN</span>
          </TrayItem>
          <TrayItem $w={24} aria-label="Wi-Fi"><WifiIcon /></TrayItem>
          <TrayItem $w={24} aria-label="Volume"><VolumeIcon /></TrayItem>
          <TrayItem $w={24} aria-label="Battery"><BatteryIcon /></TrayItem>
          <Clock>10:41<br />31-10-2025</Clock>
        </Tray>
      </Taskbar>
    </Screen>
  );
}
